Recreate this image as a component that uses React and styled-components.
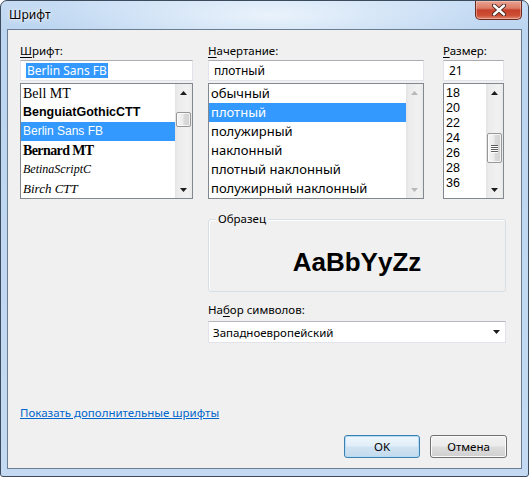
import React from 'react';
import styled, { createGlobalStyle } from 'styled-components';

const GlobalStyle = createGlobalStyle`
  html, body {
    margin: 0;
    padding: 0;
  }
  body {
    width: 529px;
    height: 477px;
    overflow: hidden;
    font-family: "Noto Sans", "Open Sans", sans-serif;
    font-size: 11.5px;
    color: #000;
  }
`;

const Window = styled.div`
  box-sizing: border-box;
  width: 529px;
  height: 477px;
  display: flex;
  flex-direction: column;
  border: 1px solid #3c4b5c;
  border-radius: 7px 7px 3px 3px;
  padding: 0 6px 7px 6px;
  background:
    radial-gradient(ellipse 230px 40px at 270px 14px, rgba(236, 244, 252, 0.95), rgba(236, 244, 252, 0)),
    linear-gradient(#c6dcf4, #bcd5f0 30px, #c3daf2);
`;

const TitleBar = styled.div`
  height: 28px;
  display: flex;
  align-items: flex-start;
  justify-content: space-between;
`;

const Title = styled.div`
  padding: 6px 0 0 2px;
  line-height: 16px;
  font-size: 12px;
  text-shadow: 0 0 6px rgba(255, 255, 255, 0.95), 0 0 2px rgba(255, 255, 255, 0.9);
`;

const CloseButton = styled.div`
  box-sizing: border-box;
  width: 47px;
  height: 19px;
  display: flex;
  align-items: center;
  justify-content: center;
  border: 1px solid #6b2a20;
  border-top: none;
  border-radius: 0 0 5px 5px;
  background: linear-gradient(#e8a292, #dc7c66 40%, #c8402a 50%, #cc4f35 80%, #e08a72);
  box-shadow: inset 0 0 0 1px rgba(255, 215, 205, 0.45);
`;

const Client = styled.div`
  flex: 1;
  display: flex;
  flex-direction: column;
  border: 1px solid #6a7d91;
  background: #f0f0f0;
  padding: 13px 14px 10px 12px;
`;

const TopRow = styled.div`
  display: flex;
  align-items: flex-start;
`;

const Column = styled.div`
  width: ${(p) => p.$w}px;
  margin-right: ${(p) => p.$gap || 0}px;
  display: flex;
  flex-direction: column;
`;

const Label = styled.div`
  line-height: 16px;
  height: 16px;
  white-space: nowrap;
  u {
    text-decoration: underline;
    text-underline-offset: 2px;
  }
`;

const Input = styled.div`
  box-sizing: border-box;
  height: 21px;
  margin-top: 1px;
  display: flex;
  align-items: center;
  padding-left: 5px;
  background: #fff;
  border: 1px solid #e2e3ea;
  border-top-color: #abadb3;
  white-space: nowrap;
  font-size: 12px;
`;

const Selected = styled.span`
  background: #3399ff;
  color: #fff;
  line-height: 15px;
  padding: 0 1px;
`;

const List = styled.div`
  box-sizing: border-box;
  height: 116px;
  margin-top: 2px;
  display: flex;
  background: #fff;
  border: 1px solid #828790;
  overflow: hidden;
`;

const Items = styled.div`
  flex: 1;
  min-width: 0;
  display: flex;
  flex-direction: column;
  padding-top: ${(p) => p.$pt || 0}px;
`;

const Item = styled.div`
  flex: none;
  height: ${(p) => p.$h}px;
  line-height: ${(p) => p.$h}px;
  padding-left: 2px;
  white-space: nowrap;
  overflow: hidden;
  background: ${(p) => (p.$sel ? '#3399ff' : 'transparent')};
  color: ${(p) => (p.$sel ? '#fff' : '#000')};
  font-family: ${(p) => p.$font || '"Noto Sans", sans-serif'};
  font-size: ${(p) => p.$size || 13}px;
  font-weight: ${(p) => p.$weight || 400};
  font-style: ${(p) => (p.$italic ? 'italic' : 'normal')};
  letter-spacing: ${(p) => p.$ls || 0}px;
`;

const Track = styled.div`
  flex: none;
  width: 17px;
  display: flex;
  flex-direction: column;
  background: linear-gradient(to right, #e3e3e3, #ececec 3px, #f1f1f1 13px, #e9e9e9);
`;

const ArrowBox = styled.div`
  flex: none;
  height: 17px;
  display: flex;
  align-items: center;
  justify-content: center;
`;

const ThumbArea = styled.div`
  flex: 1;
  display: flex;
  flex-direction: column;
`;

const Thumb = styled.div`
  box-sizing: border-box;
  flex: none;
  margin: 0 1px;
  border: 1px solid #979797;
  border-radius: 2px;
  display: flex;
  flex-direction: column;
  align-items: center;
  justify-content: center;
  gap: 1px;
  background: linear-gradient(to right, #f5f5f5, #ececec 45%, #dadada 55%, #d2d2d2);
  box-shadow: inset 0 0 0 1px rgba(255, 255, 255, 0.7);
`;

const Grip = styled.div`
  width: 7px;
  height: 1px;
  background: #5f5f5f;
  box-shadow: 0 1px 0 #ffffff;
`;

const Lower = styled.div`
  margin-left: 188px;
  width: 298px;
  display: flex;
  flex-direction: column;
`;

const GroupBox = styled.div`
  position: relative;
  box-sizing: border-box;
  height: 73px;
  margin-top: 20px;
  border: 1px solid #d5dfe5;
  border-radius: 3px;
  box-shadow: inset 1px 1px 0 #fff;
  display: flex;
  align-items: center;
  justify-content: center;
  padding-top: 12px;
`;

const GroupCaption = styled.span`
  position: absolute;
  top: -9px;
  left: 7px;
  padding: 0 2px;
  line-height: 16px;
  background: #f0f0f0;
`;

const Sample = styled.div`
  font-family: "Liberation Sans", Arial, sans-serif;
  font-weight: 700;
  font-size: 26px;
  line-height: 30px;
`;

const CharsetLabel = styled(Label)`
  margin-top: 10px;
`;

const Combo = styled.div`
  box-sizing: border-box;
  height: 22px;
  margin-top: 3px;
  display: flex;
  align-items: center;
  justify-content: space-between;
  padding: 0 5px 0 4px;
  background: #fff;
  border: 1px solid #e2e3ea;
  border-top-color: #b5b7bd;
`;

const Footer = styled.div`
  margin-top: auto;
  display: flex;
  flex-direction: column;
`;

const Link = styled.a`
  align-self: flex-start;
  line-height: 16px;
  color: #0066cc;
  text-decoration: underline;
  cursor: pointer;
`;

const ButtonRow = styled.div`
  margin-top: 14px;
  display: flex;
  justify-content: flex-end;
  gap: 10px;
`;

const Button = styled.button`
  box-sizing: border-box;
  width: ${(p) => p.$w}px;
  height: 23px;
  padding: 0;
  font-family: "Noto Sans", sans-serif;
  font-size: 11.5px;
  color: #000;
  border-radius: 3px;
  border: 1px solid ${(p) => (p.$default ? '#3c7fb1' : '#707070')};
  background: ${(p) =>
    p.$default
      ? 'linear-gradient(#eef6fc, #e1eef8 48%, #cfe3f2 52%, #c3dbee)'
      : 'linear-gradient(#f2f2f2, #ebebeb 48%, #dddddd 52%, #cfcfcf)'};
  box-shadow: inset 0 0 0 1px ${(p) => (p.$default ? '#b5dcf5' : '#fbfbfb')};
`;

const Arrow = ({ down, disabled }) => (
  <svg width="7" height="4" viewBox="0 0 7 4">
    <path
      d={down ? 'M0 0 H7 L3.5 4 Z' : 'M0 4 H7 L3.5 0 Z'}
      fill={disabled ? '#b8b8b8' : '#1c1c1c'}
    />
  </svg>
);

const ScrollBar = ({ thumbTop, thumbHeight, grip, disabled }) => (
  <Track>
    <ArrowBox>
      <Arrow disabled={disabled} />
    </ArrowBox>
    <ThumbArea>
      {!disabled && (
        <Thumb style={{ marginTop: thumbTop, height: thumbHeight }}>
          {grip && (
            <>
              <Grip />
              <Grip />
              <Grip />
              <Grip />
            </>
          )}
        </Thumb>
      )}
    </ThumbArea>
    <ArrowBox>
      <Arrow down disabled={disabled} />
    </ArrowBox>
  </Track>
);

const fonts = [
  { name: 'Bell MT', font: '"Liberation Serif", serif', size: 14 },
  { name: 'BenguiatGothicCTT', font: '"Liberation Sans", sans-serif', size: 12.5, weight: 700 },
  { name: 'Berlin Sans FB', font: '"Liberation Sans", sans-serif', size: 12, sel: true },
  { name: 'Bernard MT', font: '"Liberation Serif", serif', size: 14, weight: 700, ls: -0.6 },
  { name: 'BetinaScriptC', font: '"Liberation Serif", serif', size: 12, italic: true },
  { name: 'Birch CTT', font: '"Liberation Serif", serif', size: 13, italic: true },
];

const styles = [
  'обычный',
  'плотный',
  'полужирный',
  'наклонный',
  'плотный наклонный',
  'полужирный наклонный',
];

const sizes = ['18', '20', '22', '24', '26', '28', '36'];

export default function App() {
  return (
    <>
      <GlobalStyle />
      <Window>
        <TitleBar>
          <Title>Шрифт</Title>
          <CloseButton>
            <svg width="14" height="12" viewBox="0 0 14 12">
              <path d="M2 1.5 L12 10.5 M12 1.5 L2 10.5" stroke="#3a1c16" strokeWidth="4.2" strokeLinecap="round" />
              <path d="M2 1.5 L12 10.5 M12 1.5 L2 10.5" stroke="#ffffff" strokeWidth="2.4" strokeLinecap="round" />
            </svg>
          </CloseButton>
        </TitleBar>
        <Client>
          <TopRow>
            <Column $w={173} $gap={15}>
              <Label>
                <u>Ш</u>рифт:
              </Label>
              <Input>
                <Selected>Berlin Sans FB</Selected>
              </Input>
              <List>
                <Items>
                  {fonts.map((f) => (
                    <Item
                      key={f.name}
                      $h={19}
                      $sel={f.sel}
                      $font={f.font}
                      $size={f.size}
                      $weight={f.weight}
                      $italic={f.italic}
                      $ls={f.ls}
                    >
                      {f.name}
                    </Item>
                  ))}
                </Items>
                <ScrollBar thumbTop={11} thumbHeight={15} />
              </List>
            </Column>
            <Column $w={216} $gap={19}>
              <Label>
                <u>Н</u>ачертание:
              </Label>
              <Input>плотный</Input>
              <List>
                <Items>
                  {styles.map((s) => (
                    <Item key={s} $h={19} $sel={s === 'плотный'}>
                      {s}
                    </Item>
                  ))}
                </Items>
                <ScrollBar disabled />
              </List>
            </Column>
            <Column $w={61}>
              <Label>
                <u>Р</u>азмер:
              </Label>
              <Input>21</Input>
              <List>
                <Items $pt={2}>
                  {sizes.map((s) => (
                    <Item key={s} $h={15} $size={12.5} $font='"Liberation Sans", sans-serif'>
                      {s}
                    </Item>
                  ))}
                </Items>
                <ScrollBar thumbTop={32} thumbHeight={30} grip />
              </List>
            </Column>
          </TopRow>

          <Lower>
            <GroupBox>
              <GroupCaption>Образец</GroupCaption>
              <Sample>AaBbYyZz</Sample>
            </GroupBox>
            <CharsetLabel>
              На<u>б</u>ор символов:
            </CharsetLabel>
            <Combo>
              <span>Западноевропейский</span>
              <Arrow down />
            </Combo>
          </Lower>

          <Footer>
            <Link>Показать дополнительные шрифты</Link>
            <ButtonRow>
              <Button $w={76} $default>
                OK
              </Button>
              <Button $w={77}>Отмена</Button>
            </ButtonRow>
          </Footer>
        </Client>
      </Window>
    </>
  );
}
